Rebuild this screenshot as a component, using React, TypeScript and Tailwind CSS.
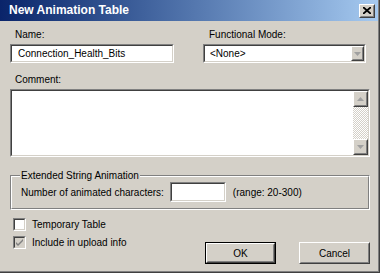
import type { ReactNode } from 'react';

const sunkenOuter = 'border border-t-[#808080] border-l-[#808080] border-b-white border-r-white';
const sunkenInner = 'border border-t-[#404040] border-l-[#404040] border-b-[#d4d0c8] border-r-[#d4d0c8]';
const raisedOuter = 'border border-t-white border-l-white border-b-[#404040] border-r-[#404040]';
const raisedInner = 'border border-t-[#d4d0c8] border-l-[#d4d0c8] border-b-[#808080] border-r-[#808080]';

function Sunken({ className = '', fill = 'bg-white', children }: { className?: string; fill?: string; children?: ReactNode }) {
  return (
    <div className={`${sunkenOuter} ${className}`}>
      <div className={`${sunkenInner} ${fill} h-full w-full flex`}>{children}</div>
    </div>
  );
}

function Raised({ className = '', children }: { className?: string; children?: ReactNode }) {
  return (
    <div className={`${raisedOuter} ${className}`}>
      <div className={`${raisedInner} bg-[#d4d0c8] h-full w-full flex items-center justify-center`}>{children}</div>
    </div>
  );
}

function Arrow({ up = false }: { up?: boolean }) {
  return (
    <svg width="7" height="4" viewBox="0 0 7 4" className={up ? 'rotate-180' : ''}>
      <path d="M0 0h7L3.5 4z" fill="#a0a0a0" />
    </svg>
  );
}

function Checkbox({ checked = false, disabled = false, label }: { checked?: boolean; disabled?: boolean; label: string }) {
  return (
    <div className="flex items-center h-[13px]">
      <Sunken className="w-[13px] h-[13px] ml-[3px]" fill={disabled ? 'bg-[#d4d0c8]' : 'bg-white'}>
        {checked && (
          <svg width="9" height="9" viewBox="0 0 9 9" className="m-auto">
            <path d="M1 4l2 2 5-5v2L3 8 1 6z" fill={disabled ? '#808080' : '#000'} />
          </svg>
        )}
      </Sunken>
      <span className="ml-[6px]">{label}</span>
    </div>
  );
}

export default function App() {
  return (
    <div className="w-[380px] h-[273px] border-r border-b border-r-[#404040] border-b-[#404040] font-['Liberation_Sans',Arial,sans-serif] text-[10px] leading-[13px] text-black overflow-hidden">
      <div className="h-full border-r border-b border-r-[#808080] border-b-[#808080] bg-[#d4d0c8] flex flex-col">
        {/* title bar */}
        <div className="h-[21px] shrink-0 flex items-center pl-[9px] pr-[3px] bg-linear-to-r from-[#0a246a] to-[#a6caf0]">
          <span className="text-white font-bold text-[12px]">New Animation Table</span>
          <Raised className="ml-auto w-[16px] h-[14px]">
            <svg width="8" height="7" viewBox="0 0 8 7">
              <path d="M0 0l8 7M8 0L0 7" stroke="#000" strokeWidth="1.8" />
            </svg>
          </Raised>
        </div>

        <div className="pl-[10px] pr-[8px] pt-[7px] flex flex-col">
          <div className="flex">
            <div className="w-[164px] flex flex-col">
              <span className="pl-[5px]">Name:</span>
              <Sunken className="mt-[3px] h-[19px]">
                <span className="pl-[6px] self-center">Connection_Health_Bits</span>
              </Sunken>
            </div>
            <div className="ml-[29px] w-[163px] flex flex-col">
              <span className="pl-[6px]">Functional Mode:</span>
              <Sunken className="mt-[3px] h-[19px]">
                <span className="pl-[5px] self-center">&lt;None&gt;</span>
                <Raised className="ml-auto w-[13px] h-[15px]">
                  <Arrow />
                </Raised>
              </Sunken>
            </div>
          </div>

          <span className="pl-[5px] mt-[10px]">Comment:</span>
          <Sunken className="mt-[3px] h-[68px]">
            <div className="ml-auto w-[15px] h-full flex flex-col bg-[repeating-conic-gradient(#d4d0c8_0_25%,#ffffff_0_50%)] bg-size-[2px_2px]">
              <Raised className="w-[15px] h-[16px]">
                <Arrow up />
              </Raised>
              <Raised className="mt-auto w-[15px] h-[16px]">
                <Arrow />
              </Raised>
            </div>
          </Sunken>

          <div className="mt-[18px] border border-t-[#808080] border-l-[#808080] border-b-white border-r-white">
            <div className="border border-t-white border-l-white border-b-[#808080] border-r-[#808080] px-[8px] pb-[6px]">
              <div className="-mt-[8px] w-fit px-[1px] bg-[#d4d0c8]">Extended String Animation</div>
              <div className="flex items-center h-[20px] pl-[1px]">
                <span>Number of animated characters:</span>
                <Sunken className="ml-[6px] w-[56px] h-[20px]" />
                <span className="ml-[7px]">(range: 20-300)</span>
              </div>
            </div>
          </div>

          <div className="mt-[8px] flex">
            <div className="flex flex-col gap-[5px]">
              <Checkbox label="Temporary Table" />
              <Checkbox label="Include in upload info" checked disabled />
            </div>
            <div className="ml-auto pt-[24px] flex gap-[23px]">
              <div className="border border-black">
                <Raised className="w-[69px] h-[20px]">OK</Raised>
              </div>
              <Raised className="w-[71px] h-[22px]">Cancel</Raised>
            </div>
          </div>
        </div>
      </div>
    </div>
  );
}
